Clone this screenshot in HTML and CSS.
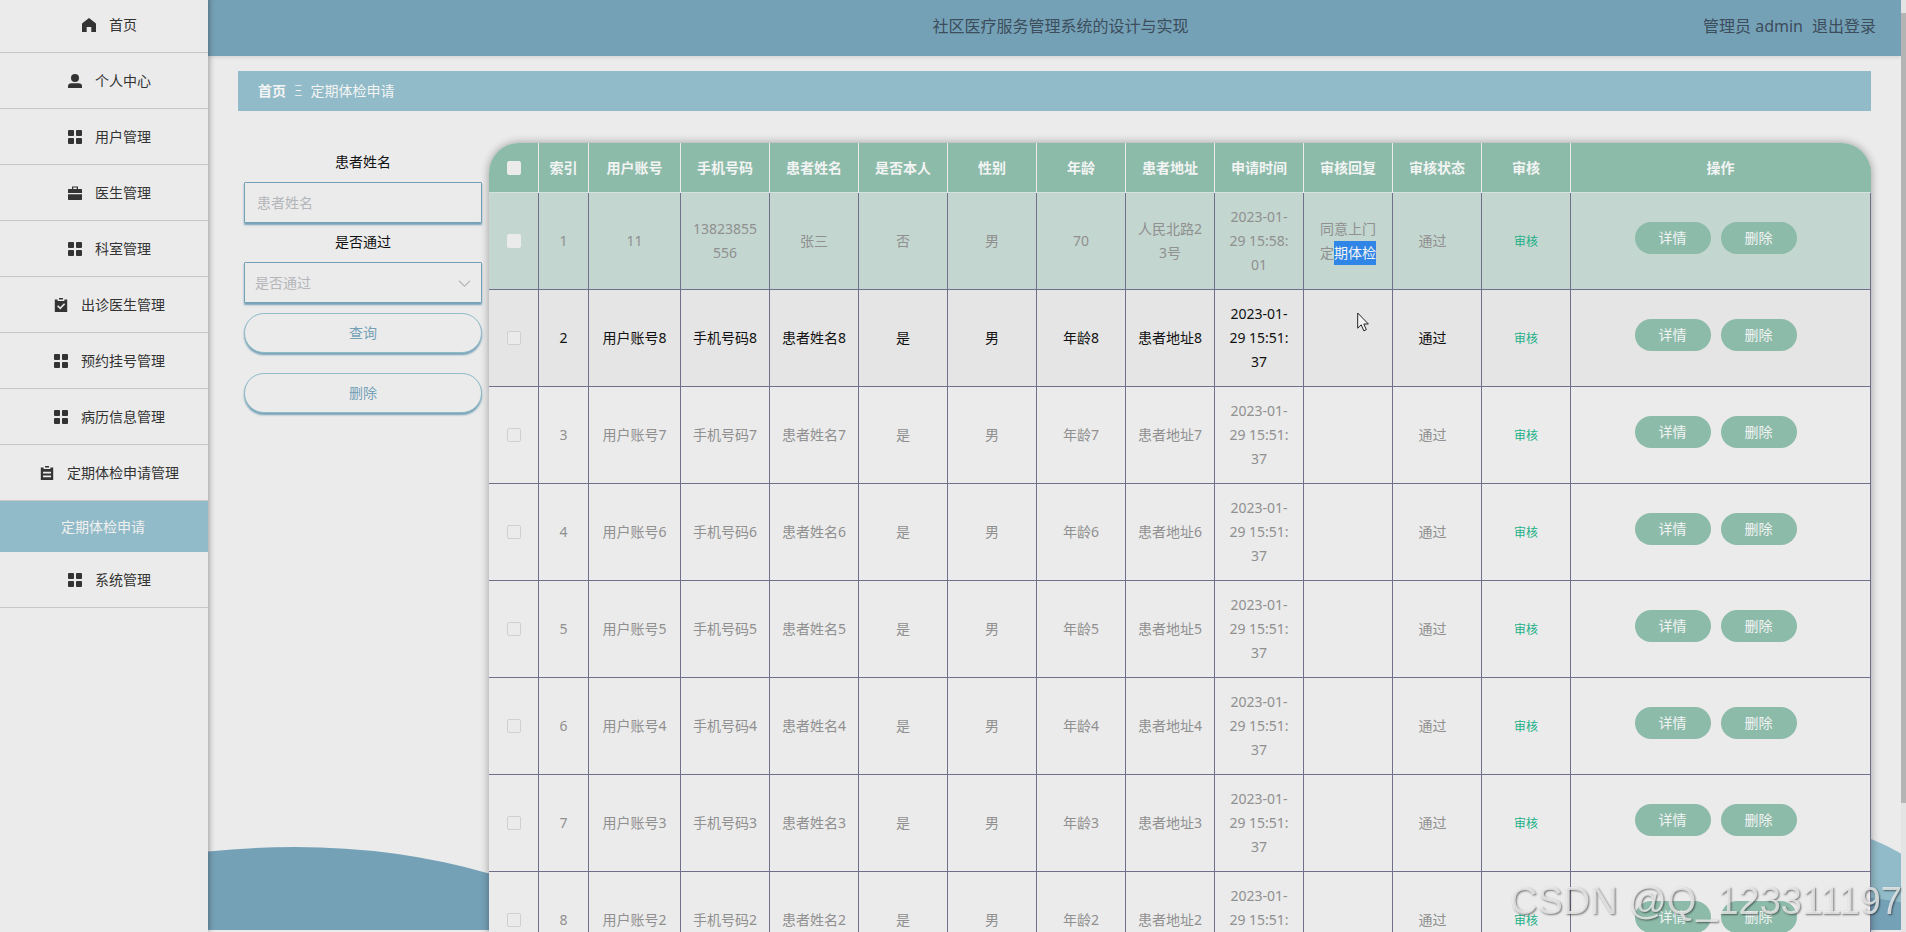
FILE: index.html
```html
<!DOCTYPE html>
<html lang="zh-CN">
<head>
<meta charset="utf-8">
<title>社区医疗服务管理系统的设计与实现</title>
<link rel="stylesheet" href="styles.css">
</head>
<body>
<svg class="defs" aria-hidden="true">
  <symbol id="grid" viewBox="0 0 14 14"><rect width="6" height="6" rx="1"/><rect x="8" width="6" height="6" rx="1"/><rect y="8" width="6" height="6" rx="1"/><rect x="8" y="8" width="6" height="6" rx="1"/></symbol>
  <symbol id="home" viewBox="0 0 14 14"><path d="M7 0 L13.4 5 Q14 5.5 14 6.2 V14 H9.3 V9 H4.7 V14 H0 V6.2 Q0 5.5 .6 5 Z"/></symbol>
  <symbol id="user" viewBox="0 0 14 14"><circle cx="7" cy="4" r="4"/><path d="M0 14.5 V12.5 Q0 9.3 3.5 9.3 H10.5 Q14 9.3 14 12.5 V14.5 Z"/></symbol>
  <symbol id="case" viewBox="0 0 14 14"><path d="M4 3 V.5 H10 V3 H13.3 Q14 3 14 3.8 V7 H0 V3.8 Q0 3 .7 3 Z M5.2 3 H8.8 V1.6 H5.2 Z" fill-rule="evenodd"/><path d="M0 8.3 H14 V13.3 Q14 14 13.3 14 H.7 Q0 14 0 13.3 Z"/></symbol>
  <symbol id="check" viewBox="0 0 14 14"><path d="M5 0 H9 V1.5 H5 Z"/><path d="M.8 1.5 H3.6 V3 H10.4 V1.5 H13.2 V14 H.8 Z"/><path class="cut" d="M3.6 7.8 L6.2 10.4 L10.6 5.8"/></symbol>
  <symbol id="board" viewBox="0 0 14 14"><path d="M5 0 H9 V1.5 H5 Z"/><path d="M.8 1.5 H3.6 V3 H10.4 V1.5 H13.2 V14 H.8 Z"/><path class="cut" d="M3 6.6 H11 M3 10.4 H11"/></symbol>
</svg>
<div class="app">
  <nav class="sidebar">
    <a class="item" href="#"><svg class="icon"><use href="#home"/></svg>首页</a>
    <a class="item" href="#"><svg class="icon"><use href="#user"/></svg>个人中心</a>
    <a class="item" href="#"><svg class="icon"><use href="#grid"/></svg>用户管理</a>
    <a class="item" href="#"><svg class="icon"><use href="#case"/></svg>医生管理</a>
    <a class="item" href="#"><svg class="icon"><use href="#grid"/></svg>科室管理</a>
    <a class="item" href="#"><svg class="icon"><use href="#check"/></svg>出诊医生管理</a>
    <a class="item" href="#"><svg class="icon"><use href="#grid"/></svg>预约挂号管理</a>
    <a class="item" href="#"><svg class="icon"><use href="#grid"/></svg>病历信息管理</a>
    <a class="item" href="#"><svg class="icon"><use href="#board"/></svg>定期体检申请管理</a>
    <a class="subitem" href="#">定期体检申请</a>
    <a class="item" href="#"><svg class="icon"><use href="#grid"/></svg>系统管理</a>
  </nav>
  <div class="page">
    <header class="topbar">
      <span class="title">社区医疗服务管理系统的设计与实现</span>
      <div class="account"><span>管理员 admin</span><a href="#">退出登录</a></div>
    </header>
    <svg class="wave" viewBox="0 0 1693 100" preserveAspectRatio="none" aria-hidden="true">
      <path class="wave-light" d="M1400 0 H1640 Q1664 5 1693 22 V100 H1400 Z"/>
      <path class="wave-dark" d="M0 20 Q150 4 280 42 L900 100 L1500 60 Q1640 60 1693 72 V100 H0 Z"/>
    </svg>
    <main class="content">
      <div class="crumbs"><a href="#">首页</a><span class="sep">Ξ</span><span>定期体检申请</span></div>
      <div class="panel">
        <form class="search">
          <label for="name">患者姓名</label>
          <input class="field" id="name" type="text" placeholder="患者姓名">
          <label for="pass">是否通过</label>
          <div class="select-wrap">
            <select class="field" id="pass"><option>是否通过</option></select>
            <svg class="chevron" viewBox="0 0 10 6"><path d="M0 .5 L5 5.5 L10 .5"/></svg>
          </div>
          <button class="action" type="button">查询</button>
          <button class="action" type="button">删除</button>
        </form>
        <div class="table-card">
          <table>
            <colgroup><col class="c-small"><col class="c-small"><col class="c-account"><col class="c-mid" span="10"><col></colgroup>
            <thead><tr><th><input type="checkbox" aria-label="全选"></th><th>索引</th><th>用户账号</th><th>手机号码</th><th>患者姓名</th><th>是否本人</th><th>性别</th><th>年龄</th><th>患者地址</th><th>申请时间</th><th>审核回复</th><th>审核状态</th><th>审核</th><th>操作</th></tr></thead>
            <tbody>
              <tr class="current"><td><input type="checkbox" aria-label="选择1"></td><td>1</td><td>11</td><td>13823855<br>556</td><td>张三</td><td>否</td><td>男</td><td>70</td><td>人民北路2<br>3号</td><td>2023-01-<br>29 15:58:<br>01</td><td>同意上门<br>定<mark>期体检</mark></td><td class="state">通过</td><td><a href="#">审核</a></td><td><div class="ops"><button type="button">详情</button><button type="button">删除</button></div></td></tr>
              <tr class="hover"><td><input type="checkbox" aria-label="选择2"></td><td>2</td><td>用户账号8</td><td>手机号码8</td><td>患者姓名8</td><td>是</td><td>男</td><td>年龄8</td><td>患者地址8</td><td>2023-01-<br>29 15:51:<br>37</td><td></td><td class="state">通过</td><td><a href="#">审核</a></td><td><div class="ops"><button type="button">详情</button><button type="button">删除</button></div></td></tr>
              <tr><td><input type="checkbox" aria-label="选择3"></td><td>3</td><td>用户账号7</td><td>手机号码7</td><td>患者姓名7</td><td>是</td><td>男</td><td>年龄7</td><td>患者地址7</td><td>2023-01-<br>29 15:51:<br>37</td><td></td><td class="state">通过</td><td><a href="#">审核</a></td><td><div class="ops"><button type="button">详情</button><button type="button">删除</button></div></td></tr>
              <tr><td><input type="checkbox" aria-label="选择4"></td><td>4</td><td>用户账号6</td><td>手机号码6</td><td>患者姓名6</td><td>是</td><td>男</td><td>年龄6</td><td>患者地址6</td><td>2023-01-<br>29 15:51:<br>37</td><td></td><td class="state">通过</td><td><a href="#">审核</a></td><td><div class="ops"><button type="button">详情</button><button type="button">删除</button></div></td></tr>
              <tr><td><input type="checkbox" aria-label="选择5"></td><td>5</td><td>用户账号5</td><td>手机号码5</td><td>患者姓名5</td><td>是</td><td>男</td><td>年龄5</td><td>患者地址5</td><td>2023-01-<br>29 15:51:<br>37</td><td></td><td class="state">通过</td><td><a href="#">审核</a></td><td><div class="ops"><button type="button">详情</button><button type="button">删除</button></div></td></tr>
              <tr><td><input type="checkbox" aria-label="选择6"></td><td>6</td><td>用户账号4</td><td>手机号码4</td><td>患者姓名4</td><td>是</td><td>男</td><td>年龄4</td><td>患者地址4</td><td>2023-01-<br>29 15:51:<br>37</td><td></td><td class="state">通过</td><td><a href="#">审核</a></td><td><div class="ops"><button type="button">详情</button><button type="button">删除</button></div></td></tr>
              <tr><td><input type="checkbox" aria-label="选择7"></td><td>7</td><td>用户账号3</td><td>手机号码3</td><td>患者姓名3</td><td>是</td><td>男</td><td>年龄3</td><td>患者地址3</td><td>2023-01-<br>29 15:51:<br>37</td><td></td><td class="state">通过</td><td><a href="#">审核</a></td><td><div class="ops"><button type="button">详情</button><button type="button">删除</button></div></td></tr>
              <tr><td><input type="checkbox" aria-label="选择8"></td><td>8</td><td>用户账号2</td><td>手机号码2</td><td>患者姓名2</td><td>是</td><td>男</td><td>年龄2</td><td>患者地址2</td><td>2023-01-<br>29 15:51:<br>37</td><td></td><td class="state">通过</td><td><a href="#">审核</a></td><td><div class="ops"><button type="button">详情</button><button type="button">删除</button></div></td></tr>
            </tbody>
          </table>
        </div>
      </div>
    </main>
  </div>
  <div class="scrollbar"><div class="thumb"></div></div>
</div>
<div class="watermark">CSDN @Q_123311197</div>
<svg class="cursor" viewBox="0 0 12 20" aria-hidden="true"><path d="M.7 1 V16.2 L4.2 12.8 L6.8 18.8 L9.3 17.7 L6.8 12 H11.4 Z"/></svg>
</body>
</html>
```
FILE: styles.css
```css
* { box-sizing: border-box; }
body {
  margin: 0;
  background: #ebebeb;
  color: #333;
  font: 14px/24px "Noto Sans", "Noto Sans CJK SC", sans-serif;
}
a { color: inherit; text-decoration: none; }
button, input, select { font: inherit; color: inherit; }
.defs { position: absolute; width: 0; height: 0; }

.app {
  display: grid;
  grid-template-columns: 208px minmax(0, 1fr) 5px;
  height: 100vh;
  overflow: hidden;
}

/* Sidebar */
.sidebar {
  position: relative;
  z-index: 2;
  margin-top: -3px;
  background: #ebebeb;
  box-shadow: 1px 0 6px rgba(0, 0, 0, .35);
}
.item {
  display: flex;
  align-items: center;
  justify-content: center;
  gap: 13px;
  height: 56px;
  padding-left: 11px;
  border-bottom: 1px solid #c8c8c8;
}
.icon { width: 14px; height: 14px; fill: #333; overflow: visible; }
.cut { fill: none; stroke: #ebebeb; stroke-width: 1.6; }
.subitem {
  display: flex;
  align-items: center;
  justify-content: center;
  height: 51px;
  padding-right: 2px;
  background: #91bbc8;
  color: #f0f0f0;
}

/* Page */
.page {
  position: relative;
  display: flex;
  flex-direction: column;
  overflow: hidden;
}
.topbar {
  display: grid;
  grid-template-columns: 1fr auto 1fr;
  align-items: center;
  flex: none;
  height: 56px;
  padding: 0 25px 4px 37px;
  background: #75a1b7;
  color: #3c4d5c;
  font-size: 16px;
  box-shadow: 0 1px 4px rgba(0, 0, 0, .12);
}
.title { grid-column: 2; }
.account { display: flex; justify-content: flex-end; gap: 9px; }
.wave {
  position: absolute;
  left: 0;
  bottom: 2px;
  width: 100%;
  height: 98px;
}
.wave-light { fill: #91bbc8; }
.wave-dark { fill: #75a1b7; }
.content { position: relative; padding: 15px 30px; }
.crumbs {
  display: flex;
  align-items: center;
  height: 40px;
  padding: 0 20px;
  background: #91bbc8;
  color: #f4f4f4;
}
.crumbs a { font-weight: 700; }
.sep { margin: 0 8px; font-weight: 300; font-size: 14px; }
.panel {
  display: grid;
  grid-template-columns: 239px minmax(0, 1fr);
  gap: 6px;
  align-items: start;
  margin-top: 32px;
  padding-left: 6px;
}

/* Search form */
.search { display: flex; flex-direction: column; width: 238px; }
.search label { height: 39px; color: #111; text-align: center; line-height: 38px; }
.field {
  display: block;
  width: 100%;
  height: 41px;
  padding: 0 12px;
  border: 1px solid #75a1b7;
  border-radius: 1px;
  outline: 0;
  background: #ebebeb;
  color: #b4b6ba;
  box-shadow: 0 2px 2px #75a1b7;
  appearance: none;
}
select.field { padding: 0 10px; }
.field::placeholder { color: #b4b6ba; opacity: 1; }
.select-wrap { position: relative; }
.chevron {
  position: absolute;
  right: 12px;
  top: 18px;
  width: 11px;
  height: 7px;
  fill: none;
  stroke: #b4b6ba;
  overflow: visible;
}
.action {
  height: 40px;
  margin-top: 10px;
  border: 1px solid #91bbc8;
  border-radius: 20px;
  background: #ebebeb;
  color: #75a1b7;
  box-shadow: 0 2px 2px #75a1b7;
}
.action + .action { margin-top: 20px; }

/* Table */
.table-card {
  overflow: hidden;
  border-radius: 30px 30px 0 0;
  background: #ebebeb;
  box-shadow: 0 0 8px rgba(0, 0, 0, .35);
}
table { width: 100%; table-layout: fixed; border-collapse: separate; border-spacing: 0; }
.c-small { width: 50px; }
.c-account { width: 92px; }
.c-mid { width: 89px; }
th {
  height: 50px;
  padding: 0;
  border-right: 1px solid #ebebeb;
  border-bottom: 1px solid #d5e2dc;
  background: #8dbbaa;
  color: #f2f4f3;
  font-weight: 700;
}
th:last-child { border-right-color: #8dbbaa; }
td {
  height: 97px;
  padding: 12px 0;
  border-right: 1px solid #70708c;
  border-bottom: 1px solid #70708c;
  color: #909090;
  text-align: center;
  white-space: nowrap;
}
td a { color: #22b088; font-size: 12px; }
.state { padding-right: 9px; }
.current td { background: #c3d6cf; }
.hover td { background: #e4e5e4; color: #111; }
.hover td a { color: #22b088; }
mark { display: inline-block; background: #2f86e6; color: #f4f4f4; }
input[type="checkbox"] {
  display: block;
  width: 14px;
  height: 14px;
  margin: 0 auto;
  border: 1px solid #d0d0d0;
  border-radius: 2px;
  background: #ebebeb;
  appearance: none;
}
th input[type="checkbox"], .current input[type="checkbox"] { border-color: #ebebeb; }
.ops { display: flex; justify-content: center; gap: 10px; padding: 0 10px 6px 0; }
.ops button {
  width: 76px;
  height: 32px;
  padding: 0;
  border: 0;
  border-radius: 16px;
  background: #8dbbaa;
  color: #f2f4f3;
}

/* Scrollbar and overlays */
.scrollbar { padding-top: 13px; background: #e4e4e4; }
.thumb { height: 86%; background: #b4b4b4; }
.watermark {
  position: fixed;
  right: 4px;
  bottom: 9px;
  color: rgba(240, 240, 240, .8);
  font: 38px/44px "Liberation Sans", Arial, sans-serif;
  text-shadow: 1px 1px 2px rgba(0, 0, 0, .5);
  white-space: nowrap;
  pointer-events: none;
}
.cursor {
  position: fixed;
  left: 1357px;
  top: 312px;
  width: 12px;
  height: 20px;
  fill: #f4f4f4;
  stroke: #222;
  pointer-events: none;
}
```
